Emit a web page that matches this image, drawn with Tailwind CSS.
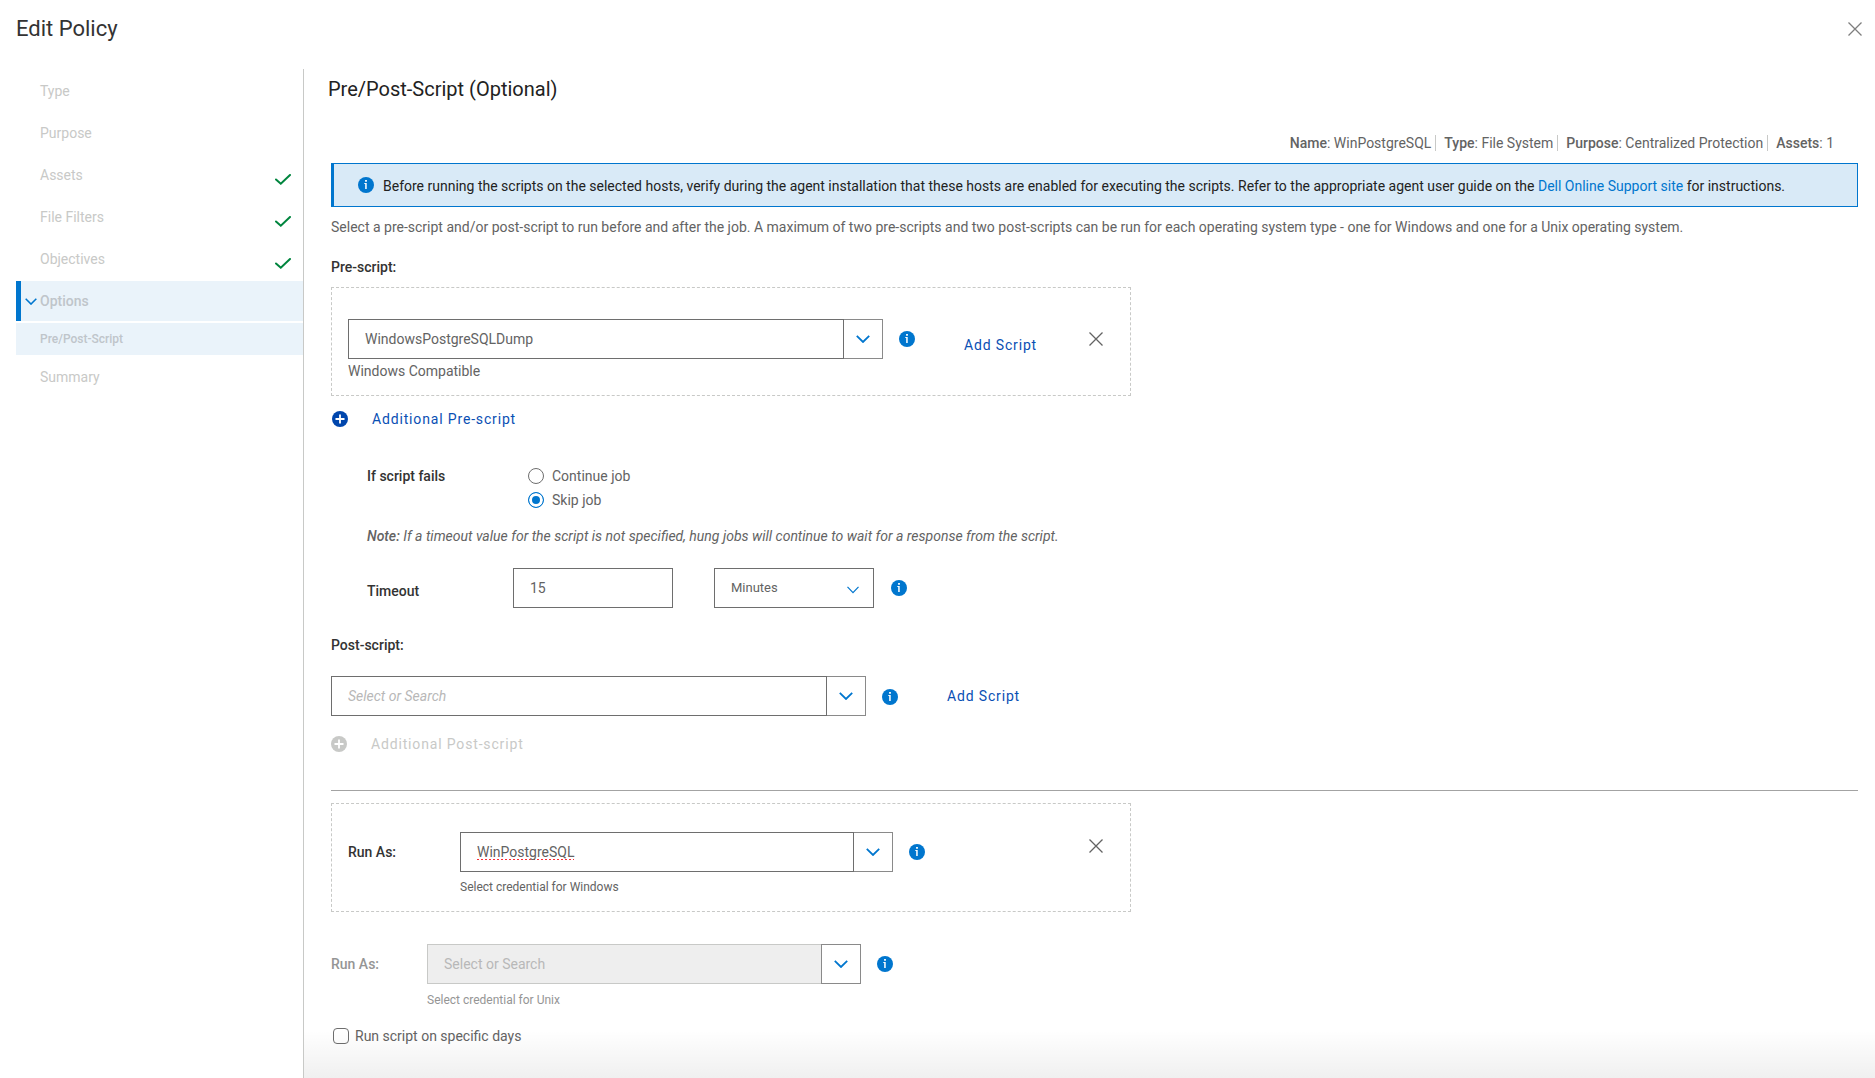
<!DOCTYPE html>
<html lang="en">
<head>
  <meta charset="UTF-8">
  <meta name="viewport" content="width=device-width, initial-scale=1.0">
  <title>Edit Policy</title>
  <script src="https://cdn.jsdelivr.net/npm/@tailwindcss/browser@4"></script>
</head>
<body class="bg-white font-[Roboto,sans-serif] text-sm leading-5 text-[#636363] min-h-screen flex flex-col">

<!-- Shared icons -->
<svg class="hidden" aria-hidden="true">
  <symbol id="info" viewBox="0 0 16 16">
    <circle cx="8" cy="8" r="8" fill="#0076ce"/>
    <path d="M7.1 3h1.8v1.7H7.1zM6.3 6h2.4v6h-1.5V7h-.9z" fill="#fff"/>
  </symbol>
  <symbol id="plus" viewBox="0 0 16 16">
    <circle cx="8" cy="8" r="8" fill="currentColor"/>
    <path d="M8 3.5v9M3.5 8h9" stroke="#fff" stroke-width="1.8"/>
  </symbol>
  <symbol id="close" viewBox="0 0 14 14">
    <path d="M.5.5l13 13M13.5.5l-13 13" fill="none" stroke="currentColor" stroke-width="1.3"/>
  </symbol>
  <symbol id="chevron" viewBox="0 0 14 8">
    <path d="M.8.8L7 7 13.2.8" fill="none" stroke="currentColor" stroke-width="1.8"/>
  </symbol>
  <symbol id="check" viewBox="0 0 16 11">
    <path d="M1 5.5l4.8 4.2L15 1" fill="none" stroke="#00853e" stroke-width="2" stroke-linecap="round"/>
  </symbol>
</svg>

<header class="h-[58px] mb-[11px] pl-4 pr-[13px] flex items-center justify-between">
  <h1 class="text-[22px] leading-7 text-[#333]">Edit Policy</h1>
  <button aria-label="Close" class="text-[#7e7e7e]"><svg class="w-3.5 h-3.5"><use href="#close"/></svg></button>
</header>

<div class="grow flex">

  <!-- Wizard steps -->
  <nav class="w-[304px] shrink-0 border-r border-[#c8c9c7] pt-0.5 pl-4 flex flex-col gap-0.5 text-[#c8c9c7]">
    <a href="#" class="h-10 pl-6 flex items-center">Type</a>
    <a href="#" class="h-10 pl-6 flex items-center">Purpose</a>
    <a href="#" class="h-10 pl-6 pr-3 flex items-center justify-between">Assets <svg class="w-4 h-[11px] mt-2"><use href="#check"/></svg></a>
    <a href="#" class="h-10 pl-6 pr-3 flex items-center justify-between">File Filters <svg class="w-4 h-[11px] mt-2"><use href="#check"/></svg></a>
    <a href="#" class="h-10 pl-6 pr-3 flex items-center justify-between">Objectives <svg class="w-4 h-[11px] mt-2"><use href="#check"/></svg></a>
    <a href="#" class="h-10 pl-1 gap-[3px] flex items-center border-l-5 border-[#0076ce] bg-[#eaf3fa] font-medium text-[#bfc5ca]"><svg class="w-3 h-[7px] text-[#0076ce]"><use href="#chevron"/></svg>Options</a>
    <a href="#" class="h-8 pl-6 flex items-center bg-[#eaf3fa] text-xs font-medium text-[#bfc5ca]">Pre/Post-Script</a>
    <a href="#" class="h-10 pl-6 flex items-center">Summary</a>
  </nav>

  <main class="grow min-w-0 relative pl-[27px] pr-[17px]">
    <h2 class="h-10 -ml-[3px] flex items-center text-xl text-[#222]">Pre/Post-Script (Optional)</h2>

    <!-- Policy summary -->
    <div class="mt-[26px] pr-6 flex justify-end gap-2 leading-4">
      <p class="pr-1 border-r border-[#c8c9c7]"><b class="font-medium">Name</b>: WinPostgreSQL</p>
      <p class="pr-1 border-r border-[#c8c9c7]"><b class="font-medium">Type</b>: File System</p>
      <p class="pr-1 border-r border-[#c8c9c7]"><b class="font-medium">Purpose</b>: Centralized Protection</p>
      <p><b class="font-medium">Assets</b>: 1</p>
    </div>

    <div class="mt-3 min-h-11 pl-6 pr-4 flex items-center gap-[9px] border border-l-3 border-[#0076ce] bg-[#d9eaf7] text-[#222]">
      <svg class="w-4 h-4 shrink-0"><use href="#info"/></svg>
      <p class="pt-0.5">Before running the scripts on the selected hosts, verify during the agent installation that these hosts are enabled for executing the scripts. Refer to the appropriate agent user guide on the <a href="#" class="text-[#0076ce]">Dell Online Support site</a> for instructions.</p>
    </div>

    <p class="mt-2.5">Select a pre-script and/or post-script to run before and after the job. A maximum of two pre-scripts and two post-scripts can be run for each operating system type - one for Windows and one for a Unix operating system.</p>

    <!-- Pre-script -->
    <label for="prescript" class="mt-5 block font-medium text-[#333]">Pre-script:</label>
    <div class="mt-2.5 max-w-[800px] border border-dashed border-[#c8c9c7] pt-[31px] pb-3.5 pl-4 pr-[27px]">
      <div class="flex items-center">
        <input id="prescript" type="text" value="WindowsPostgreSQLDump" class="w-[496px] h-10 px-4 border border-[#6e6e6e]">
        <button aria-label="Show scripts" class="w-[39px] h-10 border border-l-0 border-[#8a8a8a] text-[#0076ce] flex items-center justify-center"><svg class="w-3.5 h-2"><use href="#chevron"/></svg></button>
        <svg class="ml-4 w-4 h-4"><use href="#info"/></svg>
        <button class="ml-[49px] pt-3 tracking-[0.06em] text-[#0a4fb4]">Add Script</button>
        <button aria-label="Remove pre-script" class="ml-auto text-[#636363]"><svg class="w-3.5 h-3.5"><use href="#close"/></svg></button>
      </div>
      <p class="mt-0.5">Windows Compatible</p>
    </div>

    <button class="mt-[13px] flex items-center gap-6 tracking-[0.06em] text-[#0a4fb4]"><svg class="w-4 h-4 ml-px text-[#0046ad]"><use href="#plus"/></svg>Additional Pre-script</button>

    <fieldset class="mt-[35px] pl-9 flex">
      <legend class="float-left w-[161px] pt-0.5 font-medium text-[#333]">If script fails</legend>
      <div class="leading-6">
        <label class="flex items-center gap-2"><input type="radio" name="fails" class="appearance-none w-4 h-4 rounded-full border border-[#6e6e6e] bg-white">Continue job</label>
        <label class="flex items-center gap-2"><input type="radio" name="fails" checked class="appearance-none w-4 h-4 rounded-full border border-[#0076ce] bg-[#0076ce] shadow-[inset_0_0_0_3px_#fff]">Skip job</label>
      </div>
    </fieldset>

    <p class="mt-3.5 pl-9 italic"><b class="font-medium">Note:</b> If a timeout value for the script is not specified, hung jobs will continue to wait for a response from the script.</p>

    <div class="mt-[22px] pl-9 flex items-center">
      <label for="timeout" class="w-[146px] pt-1.5 font-medium text-[#333]">Timeout</label>
      <input id="timeout" type="text" value="15" class="w-40 h-10 px-4 border border-[#6e6e6e]">
      <div class="relative ml-[41px]">
        <select aria-label="Timeout unit" class="appearance-none w-40 h-10 px-4 border border-[#6e6e6e] text-[13px]">
          <option>Minutes</option>
          <option>Hours</option>
        </select>
        <svg viewBox="0 0 12 8" class="absolute right-[15px] top-[18px] w-3 h-2 pointer-events-none"><path d="M.5.8L6 6.6 11.5.8" fill="none" stroke="#0076ce" stroke-width="1.2"/></svg>
      </div>
      <svg class="ml-[17px] w-4 h-4"><use href="#info"/></svg>
    </div>

    <!-- Post-script -->
    <label for="postscript" class="mt-[27px] block font-medium text-[#333]">Post-script:</label>
    <div class="mt-[21px] flex items-center">
      <input id="postscript" type="text" placeholder="Select or Search" class="w-[496px] h-10 px-4 border border-[#6e6e6e] placeholder:italic placeholder:text-[#b8b8b8]">
      <button aria-label="Show scripts" class="w-[39px] h-10 border border-l-0 border-[#8a8a8a] text-[#0076ce] flex items-center justify-center"><svg class="w-3.5 h-2"><use href="#chevron"/></svg></button>
      <svg class="ml-4 mt-0.5 w-4 h-4"><use href="#info"/></svg>
      <button class="ml-[49px] tracking-[0.06em] text-[#0a4fb4]">Add Script</button>
    </div>

    <button disabled class="mt-[18px] flex items-center gap-6 tracking-[0.06em] text-[#c8c9c7]"><svg class="w-4 h-4"><use href="#plus"/></svg>Additional Post-script</button>

    <hr class="mt-9 border-[#a3a3a3]">

    <!-- Credentials -->
    <div class="mt-3 max-w-[800px] border border-dashed border-[#c8c9c7] pt-7 pb-4 pl-4 pr-[27px]">
      <div class="flex items-center">
        <label for="runas-win" class="w-28 font-medium text-[#333]">Run As:</label>
        <input id="runas-win" type="text" value="WinPostgreSQL" class="w-[394px] h-10 px-4 border border-[#6e6e6e] underline decoration-dotted decoration-red-500 decoration-2 underline-offset-2 [text-decoration-skip-ink:none]">
        <button aria-label="Show Windows credentials" class="w-[39px] h-10 border border-l-0 border-[#8a8a8a] text-[#0076ce] flex items-center justify-center"><svg class="w-3.5 h-2"><use href="#chevron"/></svg></button>
        <svg class="ml-4 w-4 h-4"><use href="#info"/></svg>
        <button aria-label="Remove credential" class="ml-auto mb-3 text-[#636363]"><svg class="w-3.5 h-3.5"><use href="#close"/></svg></button>
      </div>
      <p class="mt-[7px] pl-28 text-xs">Select credential for Windows</p>
    </div>

    <div class="mt-8">
      <div class="flex items-center">
        <label for="runas-unix" class="w-24 font-medium text-[#959595]">Run As:</label>
        <input id="runas-unix" type="text" placeholder="Select or Search" disabled class="w-[394px] h-10 px-4 border border-r-0 border-[#c8c9c7] bg-[#eee] placeholder:text-[#b8b8b8]">
        <button aria-label="Show Unix credentials" class="w-10 h-10 border border-[#8a8a8a] bg-white text-[#0076ce] flex items-center justify-center"><svg class="w-3.5 h-2"><use href="#chevron"/></svg></button>
        <svg class="ml-4 w-4 h-4"><use href="#info"/></svg>
      </div>
      <p class="mt-2 pl-24 text-xs text-[#959595]">Select credential for Unix</p>
    </div>

    <label class="mt-[18px] pl-0.5 flex items-center gap-1.5"><input type="checkbox" class="appearance-none w-4 h-4 rounded-sm border border-[#6e6e6e] bg-white">Run script on specific days</label>

    <!-- Fade at the bottom edge -->
    <div class="absolute inset-x-0 bottom-0 h-12 pointer-events-none bg-linear-to-b from-transparent to-black/6"></div>
  </main>
</div>

</body>
</html>
